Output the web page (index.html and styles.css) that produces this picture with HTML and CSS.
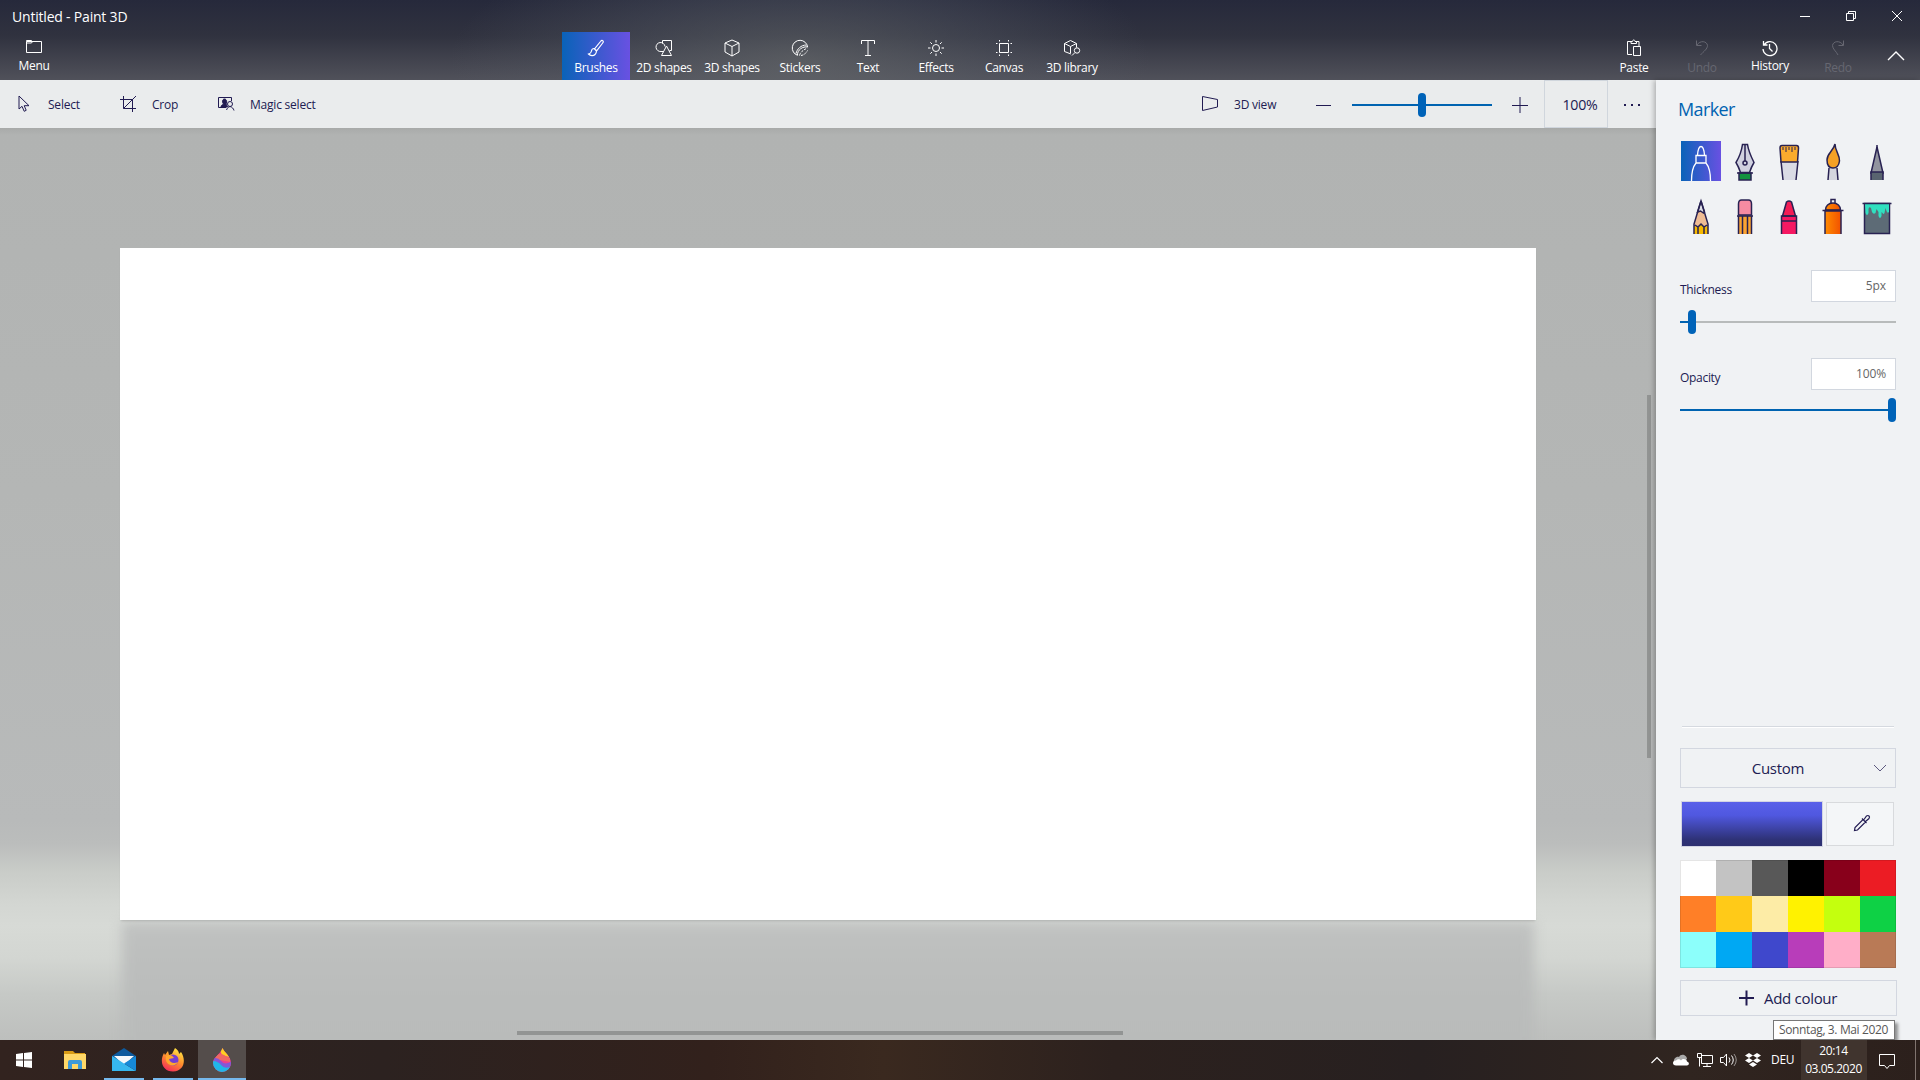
FILE: index.html
```html
<!DOCTYPE html>
<html lang="en">
<head>
<meta charset="utf-8">
<title>Untitled - Paint 3D</title>
<link rel="stylesheet" href="styles.css">
</head>
<body>
<div class="app">
  <header class="header">
    <div class="titlebar">
      <span class="title">Untitled - Paint 3D</span>
      <div class="window-buttons">
        <svg width="46" height="32" viewBox="0 0 46 32"><path d="M18 16.500h10"/></svg>
        <svg width="46" height="32" viewBox="0 0 46 32"><path d="M18.500 13.500h7v7h-7zM20.500 13.500v-2h7v7h-2"/></svg>
        <svg width="46" height="32" viewBox="0 0 46 32"><path d="M18 11l10 10M28 11L18 21"/></svg>
      </div>
    </div>
    <nav class="ribbon">
      <div class="tab menu"><svg width="18" height="18" viewBox="0 0 18 18"><path d="M1.500 4.500h15v11h-15zM1.500 4.500v-1h5l1 1-1 1.500h-5"/></svg><span>Menu</span></div>
      <div class="tabs">
        <div class="tab active"><svg width="18" height="18" viewBox="0 0 18 18"><path d="M15.500 1.500c1 .5 1 1.500.2 2.500L9.500 12l-2-2 6-7.500c.7-1 1.300-1.400 2-1zM7 9.500c-2 0-2.500 1.500-2.700 3-.2 1.500-1.300 2-2.800 2.500 2 2 5 2 6.500.5 1.200-1.200 1.500-2.500 1.500-4z" stroke-width="1.200"/></svg><span>Brushes</span></div>
        <div class="tab"><svg width="18" height="18" viewBox="0 0 18 18"><path d="M7.500 4.500v-3h9v10h-2M8.500 12.500H6a4.500 4.500 0 1 1 4-5M11.500 7l5 9.500h-10z"/></svg><span>2D shapes</span></div>
        <div class="tab"><svg width="18" height="18" viewBox="0 0 18 18"><path d="M9 1l7 3v9l-7 4-7-4V4zM2 4l7 3.500L16 4M9 7.500V17"/></svg><span>3D shapes</span></div>
        <div class="tab"><svg width="18" height="18" viewBox="0 0 18 18"><path d="M6.500 16.300A7.700 7.700 0 1 1 16.600 8C12 7 6 11 6.500 16.300zM5 14.500C6 10 10 6 15.500 6"/><path d="M8.500 16.500q1-4.500 8-7.500M10 16.500q4-.5 6.500-5" stroke-dasharray="2.500 1.200"/></svg><span>Stickers</span></div>
        <div class="tab"><svg width="18" height="18" viewBox="0 0 18 18"><path d="M2.500 5V1.500h13V5M9 1.500v15M6 16.500h6"/></svg><span>Text</span></div>
        <div class="tab"><svg width="18" height="18" viewBox="0 0 18 18"><circle cx="9" cy="9" r="3.500"/><path d="M9 1v2.500M9 14.500V17M1 9h2.500M14.500 9H17M3.300 3.300L5 5M13 13l1.700 1.700M14.700 3.300L13 5M5 13l-1.700 1.700"/></svg><span>Effects</span></div>
        <div class="tab"><svg width="18" height="18" viewBox="0 0 18 18"><path d="M4.500 4.500h9v9h-9zM4.500 1v1.500M13.500 1v1.500M4.500 15.500V17M13.500 15.500V17M1 4.500h1.500M15.500 4.500H17M1 13.500h1.500M15.500 13.500H17"/></svg><span>Canvas</span></div>
        <div class="tab"><svg width="18" height="18" viewBox="0 0 18 18"><path d="M8 15l-6.500-2.500v-8L7.500 1.500l6 3v4M1.500 4.500l6 3 6-3M7.500 7.500V14"/><circle cx="14" cy="11.500" r="2.700"/><path d="M12 13.500L9 16.500"/></svg><span>3D library</span></div>
      </div>
      <div class="actions">
        <div class="tab"><svg width="18" height="18" viewBox="0 0 18 18"><path d="M7 15.500H2.500v-13H6M11 2.500h3V7M6 4.500v-2h1.500c0-2 2.500-2 2.500 0h1.500v2zM8.500 7.500h7v9h-7z"/></svg><span>Paste</span></div>
        <div class="tab disabled"><svg width="18" height="18" viewBox="0 0 18 18"><path d="M3.500 1.500v5h5M4 6c3-5 10-4 10.500.5C14.500 10 11 12 7.500 16"/></svg><span>Undo</span></div>
        <div class="tab history"><svg width="18" height="18" viewBox="0 0 18 18"><path d="M2.500 2v4h4M3 6A7 7 0 1 1 2 10M8.500 5v4.500l3 3" stroke-width="1.300"/></svg><span>History</span></div>
        <div class="tab disabled"><svg width="18" height="18" viewBox="0 0 18 18"><path d="M14.500 1.500v5h-5M14 6C11 1 4 2 3.500 6.500 3.500 10 7 12 9 16"/></svg><span>Redo</span></div>
        <svg class="collapse" width="18" height="10" viewBox="0 0 18 10"><path d="M1 9l8-8 8 8" stroke-width="1.400"/></svg>
      </div>
    </nav>
  </header>

  <div class="workspace">
    <div class="editor">
      <div class="toolbar">
        <div class="tool select"><svg width="18" height="18" viewBox="0 0 18 18"><path d="M2 1v13l3-2.700 2.200 5 2-1-2-4.600H12z"/></svg><span>Select</span></div>
        <div class="tool crop"><svg width="18" height="18" viewBox="0 0 18 18"><path d="M4.500 1v12.500H17M1 4.500h12.500V17M4.500 13.500L17 1"/></svg><span>Crop</span></div>
        <div class="tool magic"><svg width="18" height="18" viewBox="0 0 18 18"><path d="M9 12.500H1.500v-10h13V6"/><path class="solid" d="M4 12c0-2 1.500-2 2.500-3C4.500 6 6 4 7.500 4s3 2 1.500 5l1.500 3z"/><circle cx="13" cy="9" r="2.500"/><path d="M9.500 15c1-2 1.500-3 3.500-3.500 2 .5 3.500 2 4 4"/></svg><span>Magic select</span></div>
        <div class="tool view"><svg width="18" height="18" viewBox="0 0 18 18"><path d="M1.500 1.500v14l15-3.500V4.500z"/></svg><span>3D view</span></div>
        <svg class="minus" width="16" height="16" viewBox="0 0 16 16"><path d="M0 8.500h15"/></svg>
        <div class="slider zoom"><i class="thumb"></i></div>
        <svg class="plus" width="16" height="16" viewBox="0 0 16 16"><path d="M0 8.500h16M8 0v16"/></svg>
        <div class="percent">100%</div>
        <div class="more"><i></i><i></i><i></i></div>
      </div>
      <div class="stage">
        <div class="canvas"></div>
        <div class="reflection"></div>
        <div class="scroll-y"></div>
        <div class="scroll-x"></div>
      </div>
    </div>

    <aside class="panel">
      <h1>Marker</h1>
      <div class="brushes">
        <div class="brush active"><svg width="40" height="40" viewBox="0 0 40 40"><path class="outline" d="M10.500 40c0-9 2-15 4.500-18h10c2.500 3 4.500 9 4.500 18M15 22v-7.500h10V22M16.500 14c.5-6 2-8.500 3.500-8.500s3 2.500 3.500 8.500"/></svg></div>
        <div class="brush"><svg width="40" height="40" viewBox="0 0 40 40"><path fill="#12913e" d="M14 32h12v7H14z"/><path fill="#d0d1df" d="M17.500 3.500h5c1 7 4 13 6.500 18-2.500 4-3.500 7-4.500 10h-9c-1-3-2-6-4.500-10 3-5 5.500-11 6.500-18z"/><path d="M20 4v16M12 32h16"/><circle cx="20" cy="22" r="2"/></svg></div>
        <div class="brush"><svg width="40" height="40" viewBox="0 0 40 40"><path fill="#dadbe5" stroke="none" d="M12 20h17l-2 19H14z"/><path d="M12 20l2 19M29 20l-2 19"/><path fill="#fbab2d" d="M11 7q0-2.500 2-2.500h14.500q2 0 2 2.500l-1 14H12z"/><path d="M14 6v3M17 6v5M20 6v3M23 6v5M26 6v3" stroke-width="1"/></svg></div>
        <div class="brush"><svg width="40" height="40" viewBox="0 0 40 40"><path fill="#d5d6df" stroke="none" d="M16 27h8l1 12H15z"/><path d="M16 27l-1 12M24 27l1 12"/><path fill="#f5a126" d="M22 3c0 7 5 11 4.500 17-.5 4-2 7-6.500 7s-6-4-6-8c0-7 6-8 8-16z"/></svg></div>
        <div class="brush"><svg width="40" height="40" viewBox="0 0 40 40"><path fill="#92949f" d="M20 6l-6 26h12z"/><path fill="#596470" stroke="none" d="M14 31h12v8H14z"/><path d="M14 39v-8h12v8M20 4v5"/></svg></div>
        <div class="brush"><svg width="40" height="40" viewBox="0 0 40 40"><path fill="#efbc94" stroke="none" d="M20 6l-7 22v10h14V28z"/><path fill="#f7b900" stroke="none" d="M13 30l4 1 3-3 3 3 4-1v8H13z"/><path fill="#dedfe8" d="M20 5l-3.500 11 3-1 3 2 1-1z"/><path d="M20 5l-7 23v10M20 5l7 23v10M14 29l3 2 3-3 3 3 3-2M17 31v7M23 31v7"/></svg></div>
        <div class="brush"><svg width="40" height="40" viewBox="0 0 40 40"><path fill="#f68ba2" d="M13.500 19V8q0-4 3-4h7q3 0 3 4v11z"/><path fill="#fba331" stroke="none" d="M13 20h14v18H13z"/><path d="M12 20h16M13.500 20v18M17.500 20v18M22.500 20v18M26.500 20v18"/></svg></div>
        <div class="brush"><svg width="40" height="40" viewBox="0 0 40 40"><path fill="#f51862" stroke="none" d="M12.500 20h15v18h-15z"/><path fill="#f21c55" d="M13.500 20L17.500 6q2.500-2 5 0l4 14z"/><path d="M12.500 38V20h15v18M12.500 25h15"/></svg></div>
        <div class="brush"><svg width="40" height="40" viewBox="0 0 40 40"><defs><linearGradient id="can"><stop offset="0" stop-color="#ff8c00"/><stop offset="1" stop-color="#f25100"/></linearGradient></defs><path fill="url(#can)" d="M12.500 14c0-4 3-7 7.500-7s7.500 3 7.500 7z"/><path fill="url(#can)" stroke="none" d="M12 15h16v23H12z"/><path d="M12 38V15h16v23M9.500 14.500h21M18 7V3.500h4V7"/></svg></div>
        <div class="brush"><svg width="40" height="40" viewBox="0 0 40 40"><path fill="#5d6b76" d="M7.500 7.500h25v30h-25z"/><path fill="#30dfbf" stroke="none" d="M8 8h24v8q-1.500 2-2.500-1l-1-3-1 5q-1 2-2 0l-1-1v4q-1.500 4-3 0v-4l-2-3-1 4q-2 2-3.500-1l-1-4q-2-2-2.500 1v4q-1.500 4-3 0z"/><path d="M5.500 7.500h29"/></svg></div>
      </div>
      <div class="setting"><label>Thickness</label><div class="value">5px</div></div>
      <div class="slider thickness"><i class="thumb"></i></div>
      <div class="setting second"><label>Opacity</label><div class="value">100%</div></div>
      <div class="slider opacity"><i class="thumb"></i></div>
      <div class="divider"></div>
      <div class="custom"><span>Custom</span><svg width="14" height="8" viewBox="0 0 14 8"><path d="M1 1l6 6 6-6"/></svg></div>
      <div class="current"><div class="swatch"></div><div class="picker"><svg width="18" height="18" viewBox="0 0 18 18"><path d="M1.500 16.500l.5-3L10 5.500l2.500 2.500-8 8zM9 4.500l4.500 4.500M11 5.500l2.500-3.500q1.500-1 2.500 0t0 2.500L12.500 7.500" stroke-width="1.200"/></svg></div></div>
      <div class="palette">
        <i class="c1"></i><i class="c2"></i><i class="c3"></i><i class="c4"></i><i class="c5"></i><i class="c6"></i>
        <i class="c7"></i><i class="c8"></i><i class="c9"></i><i class="c10"></i><i class="c11"></i><i class="c12"></i>
        <i class="c13"></i><i class="c14"></i><i class="c15"></i><i class="c16"></i><i class="c17"></i><i class="c18"></i>
      </div>
      <div class="add"><svg width="16" height="16" viewBox="0 0 16 16"><path d="M0 8h15M7.500 .5v15" stroke-width="2"/></svg><span>Add colour</span></div>
      <div class="tooltip">Sonntag, 3. Mai 2020</div>
    </aside>
  </div>

  <footer class="taskbar">
    <div class="task start"><svg width="16" height="16" viewBox="0 0 16 16"><path fill="#fff" d="M0 2l7-1v6.500H0zM8 1l8-1v7.500H8zM0 8.500h7V15l-7-1zM8 8.500h8V16l-8-1z"/></svg></div>
    <div class="task explorer"><svg width="24" height="24" viewBox="0 0 24 24"><path fill="#d99c16" d="M1 3h9l2 2h10v4H1z"/><path fill="#ffd868" d="M1 6h22v15H1z"/><path fill="#3d9ad8" d="M5 21v-7q0-2 2-2h10q2 0 2 2v7h-4v-5H9v5z"/></svg></div>
    <div class="task mail"><svg width="24" height="24" viewBox="0 0 24 24"><path fill="#0d5a9e" d="M0 8l12-8 12 8v5H0z"/><path fill="#f4f8fb" d="M2 8h20l-10 9z"/><path fill="#36b7ef" d="M0 8l24 15H0z"/><path fill="#1689d8" d="M24 8v15L12 15.500z"/></svg></div>
    <div class="task firefox"><svg width="24" height="24" viewBox="0 0 24 24"><defs><linearGradient id="ff" x1=".8" y1="0" x2=".3" y2="1"><stop offset="0" stop-color="#ffee45"/><stop offset=".5" stop-color="#ff902e"/><stop offset="1" stop-color="#f62c59"/></linearGradient></defs><path fill="url(#ff)" d="M3 5l1 2 3-4 1 4 3-1 3-6c3 2 4 4 4 6l2-2c5 7 4 19-8 19.500C2 23.500-2 14 3 5z"/><circle cx="12" cy="12" r="5.500" fill="#743ed2"/><path fill="#ffa62d" d="M5 8c4-2 6-1 8 2-2 0-3 1-5 1 1 4 5 5 9 3-3 6-14 4-12-6z"/></svg></div>
    <div class="task paint"><svg width="20" height="24" viewBox="0 0 20 24"><defs><clipPath id="drop"><path d="M10.500 0c2 5 8.500 8 8.500 15a9 9 0 0 1-18 0C1 9 8 7 10.500 0z"/></clipPath></defs><g clip-path="url(#drop)"><path fill="#ed3d91" d="M0 0h20v24H0z"/><path fill="#ffcf22" d="M7 0h8l2 9-7-2z"/><path fill="#f06963" d="M4 7q5-2 8 0t6 3v4L3 11z"/><path fill="#8158d8" d="M0 11q5-3 9 2t11 0v7l-10 1z"/><path fill="#20b7e8" d="M0 13q6 0 9 4t9 2v5H0z"/></g></svg></div>
    <div class="tray">
      <svg class="up" width="14" height="10" viewBox="0 0 14 10"><path d="M1.500 8L7 2.500 12.500 8" stroke-width="1.200"/></svg>
      <svg class="cloud" width="18" height="14" viewBox="0 0 18 14"><path fill="#aaa" stroke="none" d="M2 10C1 5 5 3 7 4c2-4 8-2 8 2l-7 6z"/><path fill="#fff" stroke="none" d="M4 12.500c-4 0-4-5 0-5 2-2 4-1 5 0 2-3 6-1 6 1 3 1 2 4 0 4z"/></svg>
      <svg class="net" width="18" height="16" viewBox="0 0 18 16"><path d="M5.500 3.500h11v8h-11zM11 11.500v3M7 14.500h8M1.500 1.500h4v4h-4zM3.500 5.500v9"/></svg>
      <svg class="vol" width="18" height="16" viewBox="0 0 18 16"><path d="M1.500 5.500h3l3-3.500v12l-3-3.500h-3zM10 5.500q2 2.500 0 5M12.500 3.500q3.500 4.500 0 9"/><path d="M15 2q4.500 6 0 12" opacity=".5"/></svg>
      <svg class="dropbox" width="18" height="16" viewBox="0 0 18 16"><path fill="#fff" stroke="none" d="M5 1l4 2.500L5 6 1 3.500zM13 1l4 2.500L13 6 9 3.500zM5 6l4 2.500L5 11 1 8.500zM13 6l4 2.500-4 2.500-4-2.500zM9 10l4 2.500L9 15l-4-2.500z"/></svg>
      <span class="lang">DEU</span>
      <div class="clock"><span>20:14</span><span>03.05.2020</span></div>
      <svg class="notif" width="18" height="18" viewBox="0 0 18 18"><path d="M1.500 2.500h15v11h-5l-2.500 3-2.500-3h-5z"/></svg>
      <i class="show-desktop"></i>
    </div>
  </footer>
</div>
</body>
</html>
```
FILE: styles.css
```css
* { box-sizing: border-box; }
body { margin: 0; overflow: hidden; font: 12px/16px "Open Sans", "Noto Sans", sans-serif; letter-spacing: -.3px; color: #211b52; }
.app { width: 1920px; height: 1080px; display: flex; flex-direction: column; }
svg { display: block; flex: none; fill: none; stroke: currentColor; }
i { display: block; }

.header { height: 80px; color: #fff; background: radial-gradient(ellipse 350px 130px at 800px 60px, rgba(112, 116, 116, .5), rgba(90, 95, 105, .32) 55%, transparent), linear-gradient(#26293b, #30323f 45%, #50515a); }
.titlebar { height: 32px; display: flex; justify-content: space-between; }
.title { padding: 9px 0 0 12px; font-size: 14px; letter-spacing: -.2px; }
.window-buttons { display: flex; }
.ribbon { height: 48px; display: flex; }
.tab { width: 68px; height: 48px; padding-top: 7px; display: flex; flex-direction: column; align-items: center; gap: 3px; white-space: nowrap; }
.tab.menu { padding-top: 5px; gap: 3px; }
.tab.history { gap: 1px; }
.tab.active { background: linear-gradient(90deg, #0963b8, #6951e2); }
.tab.disabled { color: #666771; }
.tabs { display: flex; margin-left: 494px; }
.actions { display: flex; margin-left: 494px; }
.collapse { margin: 19px 0 0 15px; }

.workspace { height: 960px; display: flex; }
.editor { width: 1656px; }
.toolbar { height: 48px; display: flex; align-items: center; background: #eaeced; }
.tool { display: flex; align-items: center; white-space: nowrap; }
.tool span { padding-top: 2px; letter-spacing: -.22px; }
.tool .solid { fill: currentColor; }
.select { width: 102px; padding-left: 17px; gap: 13px; }
.crop { width: 98px; padding-left: 17px; gap: 15px; }
.magic { width: 985px; padding-left: 17px; gap: 15px; }
.view { padding-left: 16px; gap: 15px; width: 131px; }
.minus { margin-top: 1px; }
.slider { position: relative; height: 24px; display: flex; align-items: center; }
.slider::before { content: ""; height: 2px; width: 100%; background: #0063b1; }
.thumb { position: absolute; top: 0; width: 8px; height: 24px; border-radius: 4px; background: #0063b8; }
.zoom { width: 140px; margin: 2px 20px 0; }
.zoom .thumb { left: 66px; }
.plus { margin-top: 1px; }
.percent { width: 64px; height: 48px; margin-left: 16px; padding: 16px 0 0 8px; border: 1px solid #d0d6dd; font-size: 14.200px; text-align: center; }
.more { display: flex; gap: 5px; margin: 2px 0 0 16px; }
.more i { width: 2px; height: 2px; background: currentColor; }

.stage { position: relative; overflow: hidden; height: 912px; padding: 120px; background: linear-gradient(#a8aaa9, #b1b3b2 7px, #b4b6b5 40%, #b8baba 76%, #bbbdbc 78.500%, #c9ccc8 81.500%, #d3d6d2 85%, #d7dad6 87.500%, #d3d6d2 91%, #c6c9c6 95%, #bdbfbd 100%); }
.canvas { position: relative; z-index: 1; width: 1416px; height: 672px; background: #fff; box-shadow: 0 2px 2px -1px rgba(90, 90, 90, .25); }
.reflection { height: 180px; margin: 2px 2px 0; background: linear-gradient(#c0c2c1, #bdbfbe 30px, #babcbb 80px, #b8bab9); filter: blur(6px); }
.scroll-y { position: absolute; left: 1647px; top: 267px; width: 4px; height: 363px; background: #929493; }
.scroll-x { position: absolute; left: 517px; top: 903px; width: 606px; height: 4px; background: #929493; }

.panel { position: relative; width: 264px; padding: 18px 24px 0; background: #f0f2f4; box-shadow: -2px 0 5px rgba(0, 0, 0, .25); z-index: 2; }
.panel h1 { margin: 0 0 0 -2px; height: 43px; font-size: 18px; line-height: 22px; font-weight: 400; letter-spacing: -.6px; color: #0063b1; }
.brushes { display: grid; grid-template-columns: repeat(5, 44px); grid-template-rows: 55px 56px; margin-left: 1px; height: 129px; }
.brush { width: 40px; height: 40px; }
.brush svg { color: #282252; stroke-width: 1.500; }
.brush .outline { stroke: #fff; stroke-width: 1.300; }
.brush.active { background: linear-gradient(90deg, #0963b8, #6951e2); }
.setting { height: 32px; display: flex; justify-content: space-between; align-items: center; }
.setting label { padding-top: 7px; }
.value { width: 85px; height: 32px; padding: 7px 9px 0 0; border: 1px solid #d2d7df; background: #fff; color: #666; text-align: right; letter-spacing: -.1px; }
.thickness { margin-top: 8px; }
.thickness::before { background: linear-gradient(90deg, #0063b1 8px, #b8bbbb 8px); }
.thickness .thumb { left: 8px; }
.second { margin-top: 24px; }
.opacity { margin-top: 8px; }
.opacity .thumb { right: 0; }
.divider { height: 2px; margin: 304px 2px 20px; background: linear-gradient(#d5d9df 50%, #fff 50%); }
.custom, .add { height: 40px; display: flex; align-items: center; border: 1px solid #d3d7e0; font-size: 15px; }
.custom { justify-content: flex-end; padding-right: 8px; gap: 69px; color: #211b52; }
.custom svg { color: #5d597f; }
.current { display: flex; gap: 3px; padding: 13px 2px 0 1px; height: 72px; }
.swatch { width: 142px; height: 46px; border: 1px solid #d3d5e3; background: linear-gradient(#5960e9, #5058e0 30%, #2e3277 85%, #2d3070); }
.picker { width: 68px; height: 44px; margin-top: 1px; padding: 0 0 2px 3px; display: grid; place-items: center; border: 1px solid #d8dadd; background: #f4f6f8; }
.palette { height: 108px; display: grid; grid-template: repeat(3, 36px) / repeat(6, 36px); position: relative; }
.palette::after { content: ""; position: absolute; inset: 0; border: 1px solid rgba(0, 0, 0, .1); }
.c1 { background: #fff; } .c2 { background: #c3c3c3; } .c3 { background: #585858; }
.c4 { background: #000; } .c5 { background: #88001b; } .c6 { background: #ec1c24; }
.c7 { background: #ff7f27; } .c8 { background: #ffca18; } .c9 { background: #fdeca6; }
.c10 { background: #fff200; } .c11 { background: #c4ff0e; } .c12 { background: #0ed145; }
.c13 { background: #8cfffb; } .c14 { background: #00a8f3; } .c15 { background: #3f48cc; }
.c16 { background: #b83dba; } .c17 { background: #ffaec8; } .c18 { background: #b97a56; }
.add { width: 217px; height: 36px; margin-top: 12px; padding-left: 58px; gap: 9px; }
.tooltip { position: absolute; left: 117px; top: 940px; width: 122px; height: 20px; padding: 1px 0 0 5px; border: 1px solid #777; background: #fff; color: #575757; white-space: nowrap; letter-spacing: -.37px; box-shadow: 3px 3px 3px rgba(0, 0, 0, .4); }

.taskbar { height: 40px; display: flex; color: #fff; background: linear-gradient(90deg, #32231f, #2c2220 20%, #32211c 37%, #3a291f 46%, #2c211e 58%, #272020 74%, #302520 88%, #2c201c); position: relative; z-index: 3; }
.task { display: grid; place-items: center; height: 40px; }
.task svg { stroke: none; }
.start { width: 48px; }
.explorer { width: 54px; }
.mail { width: 40px; margin-left: 2px; border-bottom: 2px solid #76b9ed; padding-top: 2px; }
.firefox { width: 40px; margin-left: 9px; border-bottom: 2px solid #76b9ed; padding-top: 2px; }
.paint { width: 48px; margin-left: 5px; background: #544d4b; border-bottom: 2px solid #76b9ed; padding-top: 2px; }
.tray { margin-left: auto; display: flex; align-items: center; }
.cloud { margin-left: 8px; }
.net, .dropbox { margin-left: 6px; }
.vol { margin: 0 1px 0 5px; }
.lang { width: 39px; padding-left: 9px; }
.clock { width: 66px; height: 40px; padding: 2px 1px 0 0; display: flex; flex-direction: column; align-items: center; line-height: 18px; letter-spacing: -.45px; background: #40342e; }
.notif { margin: 2px 0 0 11px; }
.show-desktop { width: 1px; height: 40px; margin: 0 4px 0 19px; background: #80746f; }
```
